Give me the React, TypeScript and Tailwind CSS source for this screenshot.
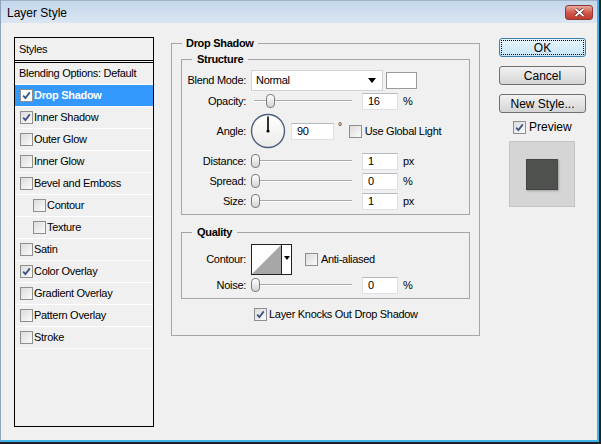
import React from 'react';

const FONT = "font-['Liberation_Sans',Arial,sans-serif]";

const Check = ({ checked = false, light = false }: { checked?: boolean; light?: boolean }) => (
  <span
    className={`inline-flex w-[13px] h-[13px] shrink-0 items-center justify-center border border-[#8e8f8f] ${
      light ? 'bg-white' : 'bg-gradient-to-br from-[#dcdcdc] to-[#fbfbfb]'
    }`}
  >
    {checked && (
      <svg width="9" height="9" viewBox="0 0 9 9">
        <path d="M1.2 4.6 L3.4 7 L7.8 1.4" fill="none" stroke="#3f5286" strokeWidth="1.8" />
      </svg>
    )}
  </span>
);

const Slider = ({ pos }: { pos: number }) => (
  <div className="relative w-[101px] h-[16px]">
    <div className="absolute left-[3px] right-0 top-[7px] h-[2px] border-t border-[#a9a9a9] bg-white" />
    <div
      className="absolute top-[1px] w-[9px] h-[14px] rounded-[4px] border border-[#7d7d7d] bg-gradient-to-b from-white to-[#d4d4d4]"
      style={{ left: pos }}
    />
  </div>
);

const Field = ({ value, w = 'w-[36px]' }: { value: string; w?: string }) => (
  <div className={`${w} h-[17px] flex items-center pl-[5px] bg-white border border-[#dde1e6] border-t-[#b5b9c0]`}>
    {value}
  </div>
);

const SliderRow = ({ label, pos, value, unit }: { label: string; pos: number; value: string; unit: string }) => (
  <div className="flex items-center h-[20px]">
    <span className="w-[64px] text-right">{label}</span>
    <div className="ml-[5px]">
      <Slider pos={pos} />
    </div>
    <div className="ml-[10px]">
      <Field value={value} />
    </div>
    <span className="ml-[5px]">{unit}</span>
  </div>
);

const Button = ({ label, primary = false }: { label: string; primary?: boolean }) => (
  <div
    className={`h-[19px] w-[87px] rounded-[3px] border flex ${
      primary
        ? 'border-[#3c7fb1] bg-gradient-to-b from-[#eaf6fd] to-[#c4e5f8]'
        : 'border-[#707070] bg-gradient-to-b from-[#f2f2f2] to-[#d5d5d5]'
    }`}
  >
    <div
      className={`flex-1 flex items-center justify-center text-[12px] ${
        primary ? 'm-[1px] border border-dotted border-black' : ''
      }`}
    >
      {label}
    </div>
  </div>
);

const styleRows = [
  { label: 'Drop Shadow', checked: true, selected: true },
  { label: 'Inner Shadow', checked: true },
  { label: 'Outer Glow' },
  { label: 'Inner Glow' },
  { label: 'Bevel and Emboss' },
  { label: 'Contour', indent: true },
  { label: 'Texture', indent: true },
  { label: 'Satin' },
  { label: 'Color Overlay', checked: true },
  { label: 'Gradient Overlay' },
  { label: 'Pattern Overlay' },
  { label: 'Stroke' },
];

export default function App() {
  return (
    <div className={`${FONT} text-[11px] tracking-[-0.3px] text-black w-[601px] h-[444px] bg-[#1f2328] pr-[2px] pb-[2px] flex`}>
      <div className="flex-1 flex flex-col bg-[#f0f0f0] border-l border-l-[#8ea3bc] border-r-[2px] border-b-[2px] border-r-[#41b3e8] border-b-[#41b3e8]">
        {/* title bar */}
        <div className="h-[23px] shrink-0 flex items-center justify-between pl-[6px] pr-[4px] bg-gradient-to-b from-[#c3d6eb] to-[#dbe6f2] border-t border-[#9fb2c8]">
          <span className="text-[12px] tracking-normal pt-[2px]">Layer Style</span>
          <div className="w-[28px] h-[15px] mt-[1px] rounded-[3px] border border-[#8b3b33] bg-gradient-to-b from-[#e8a99f] via-[#d25b4f] to-[#c1392d] flex items-center justify-center">
            <svg width="11" height="9" viewBox="0 0 11 9">
              <path d="M1.5 1 L9.5 8 M9.5 1 L1.5 8" stroke="#5a1a15" strokeWidth="3.2" />
              <path d="M1.5 1 L9.5 8 M9.5 1 L1.5 8" stroke="#ffffff" strokeWidth="1.8" />
            </svg>
          </div>
        </div>

        {/* body */}
        <div className="flex pt-[13px] pl-[13px]">
          {/* styles list */}
          <div className="mt-[1px] w-[140px] h-[390px] border border-black flex flex-col">
            <div className="h-[23px] border-b border-black flex items-center pl-[4px]">Styles</div>
            <div className="h-[1px]" />
            <div className="border-t border-black" />
            <div className="h-[22px] border-b border-white flex items-center pl-[4px]">Blending Options: Default</div>
            {styleRows.map((r) => (
              <div
                key={r.label}
                className={`h-[22px] border-b border-white flex items-center gap-[1px] ${
                  r.indent ? 'pl-[18px]' : 'pl-[5px]'
                } ${r.selected ? 'bg-[#3399ff] text-white font-bold' : ''}`}
              >
                <Check checked={r.checked} light={r.selected} />
                <span>{r.label}</span>
              </div>
            ))}
          </div>

          {/* drop shadow group */}
          <fieldset className="ml-[17px] w-[309px] h-[300px] border border-[#a6a6a6] px-[9px] pt-[2px]">
            <legend className="ml-[1px] px-[4px] font-bold leading-[14px]">Drop Shadow</legend>

            <fieldset className="border border-[#a6a6a6] pt-[4px] pb-[3px]">
              <legend className="ml-[10px] px-[5px] font-bold leading-[14px]">Structure</legend>

              <div className="flex items-center h-[21px]">
                <span className="w-[64px] text-right">Blend Mode:</span>
                <div className="ml-[5px] w-[132px] h-[21px] bg-white border border-[#d0d3d8] flex items-center justify-between pl-[4px] pr-[6px]">
                  <span>Normal</span>
                  <svg width="8" height="5" viewBox="0 0 8 5">
                    <path d="M0 0 L8 0 L4 5 Z" fill="#000" />
                  </svg>
                </div>
                <div className="ml-[3px] w-[31px] h-[17px] bg-white border border-[#9a9a9a]" />
              </div>

              <SliderRow label="Opacity:" pos={15} value="16" unit="%" />

              <div className="flex items-center h-[40px]">
                <span className="w-[64px] text-right">Angle:</span>
                <svg className="ml-[4px]" width="36" height="36" viewBox="0 0 36 36">
                  <defs>
                    <linearGradient id="dial" x1="0" y1="0" x2="0" y2="1">
                      <stop offset="0" stopColor="#ffffff" />
                      <stop offset="1" stopColor="#ecebe8" />
                    </linearGradient>
                  </defs>
                  <circle cx="18" cy="18" r="16.5" fill="url(#dial)" stroke="#4d5d7e" strokeWidth="1.4" />
                  <line x1="18" y1="18" x2="18" y2="3.5" stroke="#000" strokeWidth="1.6" />
                  <circle cx="18" cy="18" r="1.6" fill="#000" />
                </svg>
                <div className="ml-[5px]">
                  <Field value="90" w="w-[43px]" />
                </div>
                <span className="ml-[4px] self-start mt-[8px] text-[10px]">°</span>
                <div className="ml-[7px] flex items-center gap-[3px]">
                  <Check />
                  <span>Use Global Light</span>
                </div>
              </div>

              <SliderRow label="Distance:" pos={0} value="1" unit="px" />
              <SliderRow label="Spread:" pos={0} value="0" unit="%" />
              <SliderRow label="Size:" pos={0} value="1" unit="px" />
            </fieldset>

            <fieldset className="mt-[10px] border border-[#a6a6a6] pt-[4px] pb-[3px]">
              <legend className="ml-[10px] px-[5px] font-bold leading-[14px]">Quality</legend>

              <div className="flex items-center h-[32px]">
                <span className="w-[64px] text-right">Contour:</span>
                <div className="ml-[5px] w-[41px] h-[31px] border border-[#222] bg-white flex">
                  <svg width="29" height="29" viewBox="0 0 29 29">
                    <path d="M0 29 L29 0 L29 29 Z" fill="#a8a7a8" />
                  </svg>
                  <div className="flex-1 border-l border-[#222] flex items-center justify-center pb-[2px]">
                    <svg width="6" height="4" viewBox="0 0 6 4">
                      <path d="M0 0 L6 0 L3 4 Z" fill="#000" />
                    </svg>
                  </div>
                </div>
                <div className="ml-[13px] flex items-center gap-[3px]">
                  <Check />
                  <span>Anti-aliased</span>
                </div>
              </div>

              <SliderRow label="Noise:" pos={0} value="0" unit="%" />
            </fieldset>

            <div className="mt-[5px] h-[20px] flex items-center gap-[2px] pl-[73px]">
              <Check checked />
              <span>Layer Knocks Out Drop Shadow</span>
            </div>
          </fieldset>

          {/* buttons + preview */}
          <div className="ml-[19px] w-[87px] mt-[2px] flex flex-col tracking-normal">
            <Button label="OK" primary />
            <div className="mt-[9px]">
              <Button label="Cancel" />
            </div>
            <div className="mt-[9px]">
              <Button label="New Style..." />
            </div>
            <div className="mt-[6px] h-[16px] pl-[14px] flex items-center gap-[3px] text-[12px]">
              <Check checked />
              <span>Preview</span>
            </div>
            <div className="mt-[6px] ml-[10px] w-[66px] h-[66px] bg-[#d5d5d5] border border-[#c4c4c4] flex items-center justify-center">
              <div className="w-[32px] h-[31px] bg-[#4f514f] border border-[#454745] shadow-[1px_1px_2px_rgba(0,0,0,0.25)]" />
            </div>
          </div>
        </div>
      </div>
    </div>
  );
}
